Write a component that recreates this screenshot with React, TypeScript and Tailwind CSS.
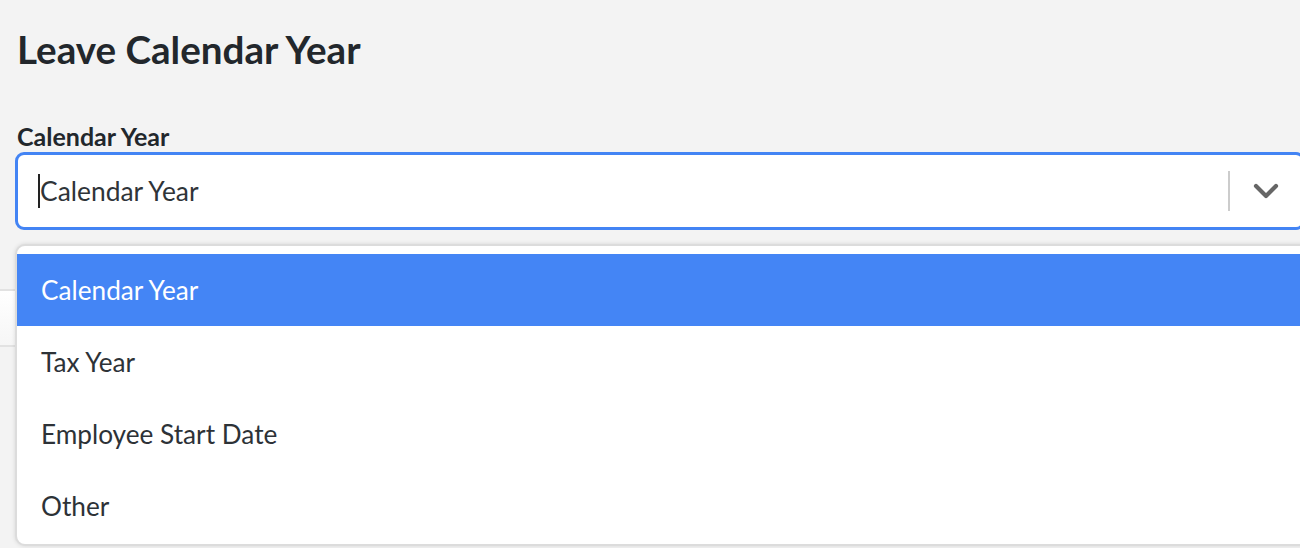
import React from "react";

const options = ["Calendar Year", "Tax Year", "Employee Start Date", "Other"];

export default function App() {
  return (
    <div
      className="relative w-[1300px] h-[548px] overflow-hidden bg-[#f3f3f3]"
      style={{ fontFamily: "Lato, 'Liberation Sans', sans-serif" }}
    >
      <div className="pl-[15px] pt-[25px]">
        <h1 className="pl-[2px] text-[38.6px] leading-[48px] font-bold text-[#22272c]">
          Leave Calendar Year
        </h1>
        <div className="mt-[49px] pl-[2px] text-[25px] leading-[29px] font-bold text-[#22272c]">
          Calendar Year
        </div>
        <div className="relative mt-[1px] w-[1290px]">
          <div className="flex h-[78px] w-full items-center rounded-[9px] border-[3px] border-[#4384f4] bg-white">
            <div className="flex flex-1 items-center pl-[20px]">
              <span className="h-[34px] w-[2px] bg-[#222]" />
              <span className="text-[26.4px] leading-[31px] text-[#2f3439]">Calendar Year</span>
            </div>
            <span className="h-[40px] w-[2px] bg-[#cccccc]" />
            <div className="flex w-[72px] items-center justify-center">
              <svg width="26" height="18" viewBox="0 0 26 18" fill="none">
                <polyline
                  points="3,4 13,14 23,4"
                  stroke="#666666"
                  strokeWidth="4.2"
                  strokeLinecap="round"
                  strokeLinejoin="round"
                />
              </svg>
            </div>
          </div>
          <div className="absolute left-0 top-[92px] z-10 w-[1300px] rounded-[10px] border-2 border-[#dcdcdc] bg-white pt-[8px] pb-[2px] shadow-[0_0_4px_rgba(0,0,0,0.12)]">
            {options.map((o, i) => (
              <div
                key={o}
                className={
                  i === 0
                    ? "flex h-[72px] items-center bg-[#4485f5] pl-[24px] text-[26.2px] leading-[31px] text-white"
                    : "flex h-[72px] items-center pl-[24px] text-[26.2px] leading-[31px] text-[#2d3237]"
                }
              >
                {o}
              </div>
            ))}
          </div>
        </div>
      </div>
      <div className="mt-[59px] h-[58px] border-y-2 border-[#e2e2e2] bg-gradient-to-b from-white to-[#f6f6f6]" />
    </div>
  );
}
